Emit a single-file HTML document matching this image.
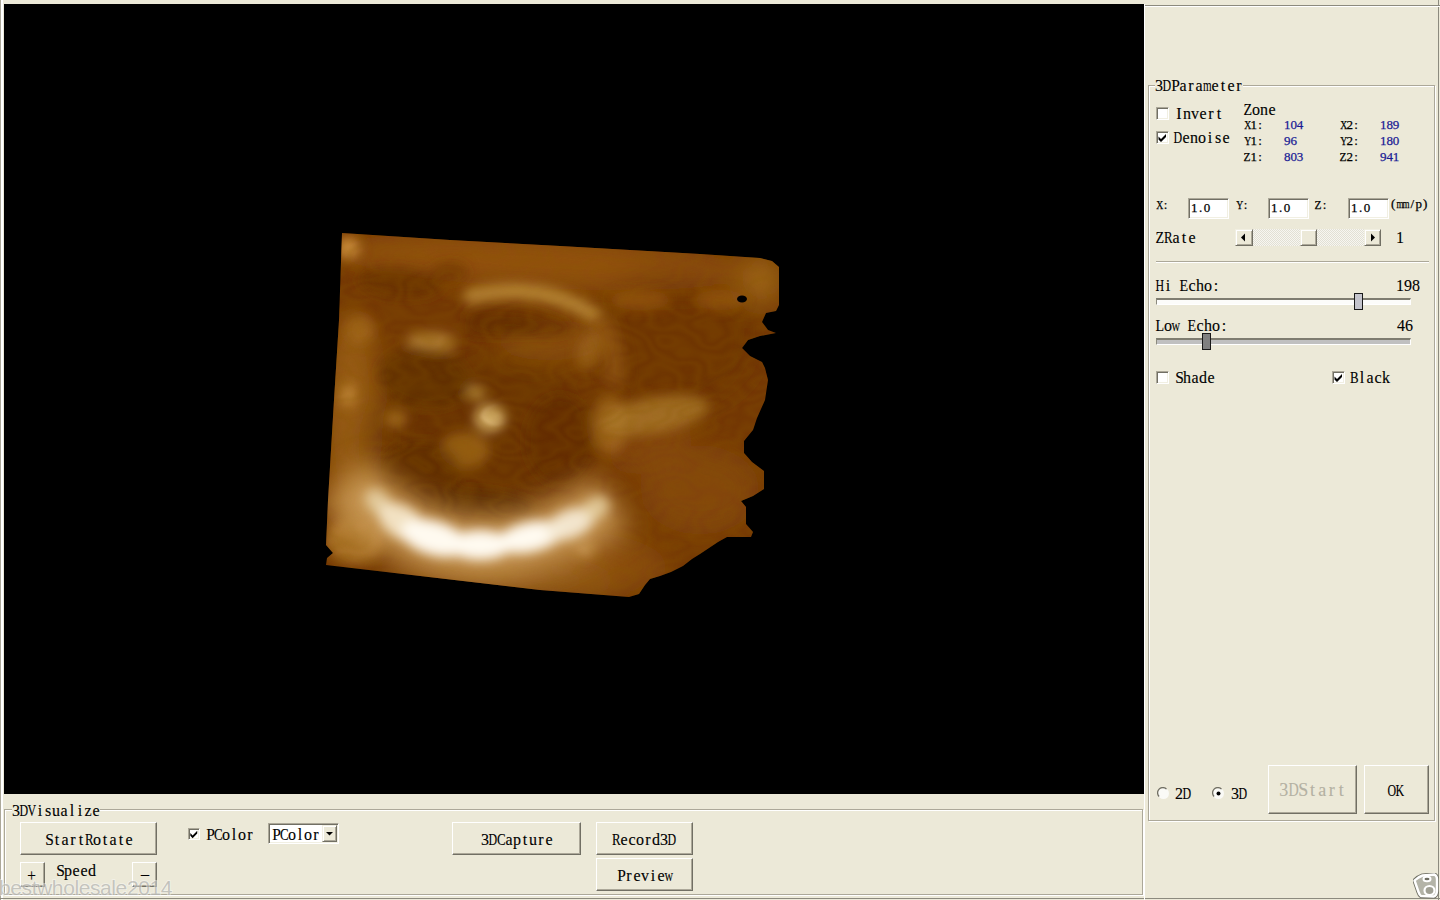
<!DOCTYPE html>
<html><head><meta charset="utf-8">
<style>
*{margin:0;padding:0;box-sizing:border-box}
html,body{width:1440px;height:900px;overflow:hidden;background:#ECE9D8}
body{position:relative;font-family:"Liberation Mono",monospace;color:#000}
.a{position:absolute}
.t{position:absolute;font-family:"Liberation Serif",serif;font-size:16px;line-height:16px;white-space:nowrap;-webkit-text-stroke:0.12px currentColor}
.s{position:absolute;font-family:"Liberation Serif",serif;font-size:13px;line-height:13px;white-space:nowrap;-webkit-text-stroke:0.25px currentColor}
i{display:inline-block;font-style:normal;text-align:center}
b{display:inline-block;font-weight:normal}
.lbl{display:inline-block}
.btn{position:absolute;background:#ECE9D8;border-top:1px solid #fff;border-left:1px solid #fff;border-right:1px solid #716F64;border-bottom:1px solid #716F64;box-shadow:inset -1px -1px 0 #ACA899}
.grp{position:absolute;border:1px solid #ACA899;box-shadow:1px 1px 0 #fff, inset 1px 1px 0 #fff}
.lbl{background:#ECE9D8}
.chk{position:absolute;width:13px;height:13px;background:#fff;border-top:1px solid #ACA899;border-left:1px solid #ACA899;border-right:1px solid #fff;border-bottom:1px solid #fff;box-shadow:inset 1px 1px 0 #716F64, inset -1px -1px 0 #F1EFE2}
.edit{position:absolute;background:#fff;border-top:1px solid #ACA899;border-left:1px solid #ACA899;border-right:1px solid #fff;border-bottom:1px solid #fff;box-shadow:inset 1px 1px 0 #716F64, inset -1px -1px 0 #F1EFE2}
.blue{color:#1a1a94}
</style></head><body>
<div class="a" style="left:0px;top:0px;width:1px;height:900px;background:#ACA899;"></div>
<div class="a" style="left:1px;top:0px;width:2px;height:900px;background:#fff;"></div>
<div class="a" style="left:1438px;top:0px;width:1px;height:900px;background:#8c8a7e;"></div>
<div class="a" style="left:0px;top:898px;width:1440px;height:1px;background:#8c8a7e;"></div>
<div class="a" style="left:1144px;top:5px;width:1295px;height:1px;background:#8c8a7e;"></div>
<div class="a" style="left:1144px;top:6px;width:1294px;height:1px;background:#fff;"></div>
<div class="a" style="left:1144px;top:4px;width:1px;height:900px;background:#fff;"></div>
<div class="a" style="left:4px;top:4px;width:1140px;height:790px;background:#000"></div>
<svg class="a" style="left:300px;top:220px" width="500" height="400" viewBox="300 220 500 400">
<defs><clipPath id="cp"><polygon points="342,233 450,240 560,246 700,254 760,258 772,261 779,267 779,290 779,305 776,311 766,313 762,322 768,330 776,333 760,336 748,340 742,348 750,356 762,362 765,368 768,380 765,400 757,418 753,430 744,441 744,453 752,462 764,471 764,489 753,496 741,501 746,507 746,524 753,532 751,537 727,537 718,542 709,548 700,554 692,559 683,566 671,572 660,576 650,579 645,585 639,594 629,597 540,590 326,565 327,558 333,553 326,545 328,500 334,400 339,320"/></clipPath>
<filter id="b12" filterUnits="userSpaceOnUse" x="250" y="170" width="600" height="500"><feGaussianBlur stdDeviation="12"/></filter>
<filter id="b8" filterUnits="userSpaceOnUse" x="250" y="170" width="600" height="500"><feGaussianBlur stdDeviation="8"/></filter>
<filter id="b6" filterUnits="userSpaceOnUse" x="250" y="170" width="600" height="500"><feGaussianBlur stdDeviation="6"/></filter>
<filter id="b4" filterUnits="userSpaceOnUse" x="250" y="170" width="600" height="500"><feGaussianBlur stdDeviation="4"/></filter>
<filter id="b14" filterUnits="userSpaceOnUse" x="250" y="170" width="600" height="500"><feGaussianBlur stdDeviation="14"/></filter>
<filter id="tex" filterUnits="userSpaceOnUse" x="300" y="220" width="500" height="400"><feTurbulence type="fractalNoise" baseFrequency="0.02 0.035" numOctaves="2" seed="7"/><feColorMatrix type="matrix" values="0 0 0 0 0.25  0 0 0 0 0.1  0 0 0 0 0  1 0 0 0 0"/><feComponentTransfer><feFuncA type="table" tableValues="0 0.6 0 0.6 0 0.6 0 0.6 0 0.6 0"/></feComponentTransfer><feGaussianBlur stdDeviation="1.3"/></filter>
</defs>
<g clip-path="url(#cp)">
<rect x="300" y="220" width="500" height="400" fill="#743804"/>
<g filter="url(#b14)">
<ellipse cx="540" cy="262" rx="210" ry="26" fill="#9a5810" opacity="0.8" transform="rotate(3 540 262)"/>
<ellipse cx="352" cy="420" rx="28" ry="110" fill="#a86c1e" opacity="0.7"/>
<ellipse cx="480" cy="440" rx="120" ry="88" fill="#62300a" opacity="0.55" transform="rotate(-5 480 440)"/>
<ellipse cx="670" cy="340" rx="90" ry="70" fill="#6a3004" opacity="0.5"/>
<ellipse cx="650" cy="440" rx="45" ry="30" fill="#8c4c0c" opacity="0.6" transform="rotate(-30 650 440)"/>
<ellipse cx="505" cy="575" rx="120" ry="18" fill="#a87028" opacity="0.7" transform="rotate(5 505 575)"/>
<ellipse cx="610" cy="560" rx="60" ry="25" fill="#9a5a14" opacity="0.6" transform="rotate(10 610 560)"/>
<ellipse cx="700" cy="490" rx="60" ry="45" fill="#8e4e0c" opacity="0.6"/>
<ellipse cx="762" cy="280" rx="20" ry="26" fill="#b07a20" opacity="0.75"/>
<ellipse cx="550" cy="340" rx="55" ry="20" fill="#a06418" opacity="0.55"/>
</g>
<g filter="url(#b6)">
<ellipse cx="348" cy="248" rx="12" ry="11" fill="#d09440" opacity="0.9"/>
<ellipse cx="400" cy="283" rx="42" ry="15" fill="#643004" opacity="0.7" transform="rotate(5 400 283)"/>
<ellipse cx="450" cy="272" rx="18" ry="10" fill="#6a3404" opacity="0.6"/>
<ellipse cx="360" cy="330" rx="14" ry="14" fill="#b07426" opacity="0.6"/>
<ellipse cx="430" cy="340" rx="25" ry="8" fill="#b88838" opacity="0.6" transform="rotate(-5 430 340)"/>
<ellipse cx="424" cy="378" rx="46" ry="30" fill="#5e2c04" opacity="0.7" transform="rotate(10 424 378)"/>
<ellipse cx="348" cy="395" rx="9" ry="12" fill="#c89040" opacity="0.7"/>
<ellipse cx="396" cy="419" rx="11" ry="8" fill="#b88030" opacity="0.7"/>
<ellipse cx="476" cy="393" rx="9" ry="7" fill="#c8a050" opacity="0.8"/>
<ellipse cx="490" cy="418" rx="15" ry="13" fill="#e4c27c" opacity="0.95"/>
<ellipse cx="465" cy="450" rx="25" ry="18" fill="#a87020" opacity="0.7"/>
<ellipse cx="420" cy="470" rx="40" ry="30" fill="#5e2c04" opacity="0.6"/>
<ellipse cx="560" cy="440" rx="35" ry="45" fill="#5e2c04" opacity="0.55"/>
<ellipse cx="475" cy="505" rx="65" ry="16" fill="#542602" opacity="0.7" transform="rotate(5 475 505)"/>
<ellipse cx="610" cy="425" rx="18" ry="30" fill="#b07828" opacity="0.6"/>
<ellipse cx="590" cy="350" rx="12" ry="20" fill="#b07828" opacity="0.5" transform="rotate(20 590 350)"/>
<ellipse cx="655" cy="415" rx="55" ry="18" fill="#b08030" opacity="0.7" transform="rotate(-10 655 415)"/>
<ellipse cx="585" cy="548" rx="9" ry="8" fill="#d0a060" opacity="0.8"/>
<ellipse cx="640" cy="300" rx="30" ry="10" fill="#a8661c" opacity="0.5"/>
<ellipse cx="720" cy="300" rx="25" ry="10" fill="#a8661c" opacity="0.5"/>
<ellipse cx="500" cy="328" rx="40" ry="9" fill="#5e2c04" opacity="0.5" transform="rotate(-3 500 328)"/>
<ellipse cx="355" cy="540" rx="30" ry="24" fill="#b88030" opacity="0.8"/>
<ellipse cx="432" cy="342" rx="25" ry="8" fill="#b88838" opacity="0.7" transform="rotate(10 432 342)"/>
<ellipse cx="518" cy="322" rx="55" ry="13" fill="#5e2c04" opacity="0.55" transform="rotate(8 518 322)"/>
</g>
<rect x="300" y="220" width="500" height="400" filter="url(#tex)" opacity="0.4"/>
<path d="M465 298 Q540 278 598 318" stroke="#c39440" stroke-width="15" fill="none" opacity="0.8" filter="url(#b6)"/><path d="M598 318 Q618 345 614 385" stroke="#a86c24" stroke-width="14" fill="none" opacity="0.6" filter="url(#b8)"/>
<path d="M345 482 Q465 600 612 502" stroke="#cc9c58" stroke-width="62" fill="none" opacity="0.9" filter="url(#b14)"/>
<g filter="url(#b6)">
<ellipse cx="378" cy="502" rx="15" ry="11" fill="#e8d4a8" opacity="0.85" transform="rotate(45 378 502)"/>
<ellipse cx="402" cy="522" rx="26" ry="16" fill="#f4e6c8" opacity="0.95" transform="rotate(32 402 522)"/>
<ellipse cx="434" cy="538" rx="34" ry="17" fill="#fffaf0" opacity="1" transform="rotate(16 434 538)"/>
<ellipse cx="480" cy="545" rx="32" ry="15" fill="#fffaf0" opacity="1" transform="rotate(0 480 545)"/>
<ellipse cx="530" cy="537" rx="34" ry="15" fill="#fffaf0" opacity="1" transform="rotate(-12 530 537)"/>
<ellipse cx="570" cy="524" rx="26" ry="14" fill="#f6ead4" opacity="0.95" transform="rotate(-22 570 524)"/>
<ellipse cx="596" cy="508" rx="14" ry="11" fill="#e8d4a8" opacity="0.8" transform="rotate(-35 596 508)"/>
</g>
<ellipse cx="742" cy="299" rx="5" ry="3.5" fill="#000"/>
</g></svg>
<div class="grp" style="left:1148px;top:85px;width:287px;height:736px"></div>
<div class="t" style="left:1155px;top:78px;"><span class="lbl"><i style="width:8px">3</i><i style="width:8px"><b style="margin:0 -1.78px;transform:scaleX(0.744)">D</b></i><i style="width:8px"><b style="margin:0 -0.45px;transform:scaleX(0.966)">P</b></i><i style="width:8px">a</i><i style="width:8px">r</i><i style="width:8px">a</i><i style="width:8px"><b style="margin:0 -2.23px;transform:scaleX(0.691)">m</b></i><i style="width:8px">e</i><i style="width:8px">t</i><i style="width:8px">e</i><i style="width:8px">r</i></span></div>
<div class="chk" style="left:1156px;top:107px;width:13px;height:13px"></div>
<div class="t" style="left:1175px;top:106px;"><i style="width:8px">I</i><i style="width:8px">n</i><i style="width:8px">v</i><i style="width:8px">e</i><i style="width:8px">r</i><i style="width:8px">t</i></div>
<div class="chk" style="left:1156px;top:131px;width:13px;height:13px"></div>
<svg class="a" style="left:1156px;top:131px" width="13" height="13" viewBox="0 0 13 13"><path d="M2.5 5.5 L5 8 L10 3 L10 6 L5 11 L2.5 8.5 Z" fill="#000"/></svg>
<div class="t" style="left:1174px;top:130px;"><i style="width:8px"><b style="margin:0 -1.78px;transform:scaleX(0.744)">D</b></i><i style="width:8px">e</i><i style="width:8px">n</i><i style="width:8px">o</i><i style="width:8px">i</i><i style="width:8px">s</i><i style="width:8px">e</i></div>
<div class="t" style="left:1244px;top:102px;"><i style="width:8px"><b style="margin:0 -0.89px;transform:scaleX(0.879)">Z</b></i><i style="width:8px">o</i><i style="width:8px">n</i><i style="width:8px">e</i></div>
<div class="s" style="left:1244px;top:118px;"><i style="width:6.4px"><b style="margin:0 -1.50px;transform:scaleX(0.745)">X</b></i><i style="width:6.4px">1</i><i style="width:6.4px">:</i></div>
<div class="s blue" style="left:1284px;top:118px;"><i style="width:6.4px">1</i><i style="width:6.4px">0</i><i style="width:6.4px">4</i></div>
<div class="s" style="left:1340px;top:118px;"><i style="width:6.4px"><b style="margin:0 -1.50px;transform:scaleX(0.745)">X</b></i><i style="width:6.4px">2</i><i style="width:6.4px">:</i></div>
<div class="s blue" style="left:1380px;top:118px;"><i style="width:6.4px">1</i><i style="width:6.4px">8</i><i style="width:6.4px">9</i></div>
<div class="s" style="left:1244px;top:134px;"><i style="width:6.4px"><b style="margin:0 -1.50px;transform:scaleX(0.745)">Y</b></i><i style="width:6.4px">1</i><i style="width:6.4px">:</i></div>
<div class="s blue" style="left:1284px;top:134px;"><i style="width:6.4px">9</i><i style="width:6.4px">6</i></div>
<div class="s" style="left:1340px;top:134px;"><i style="width:6.4px"><b style="margin:0 -1.50px;transform:scaleX(0.745)">Y</b></i><i style="width:6.4px">2</i><i style="width:6.4px">:</i></div>
<div class="s blue" style="left:1380px;top:134px;"><i style="width:6.4px">1</i><i style="width:6.4px">8</i><i style="width:6.4px">0</i></div>
<div class="s" style="left:1244px;top:150px;"><i style="width:6.4px"><b style="margin:0 -0.77px;transform:scaleX(0.882)">Z</b></i><i style="width:6.4px">1</i><i style="width:6.4px">:</i></div>
<div class="s blue" style="left:1284px;top:150px;"><i style="width:6.4px">8</i><i style="width:6.4px">0</i><i style="width:6.4px">3</i></div>
<div class="s" style="left:1340px;top:150px;"><i style="width:6.4px"><b style="margin:0 -0.77px;transform:scaleX(0.882)">Z</b></i><i style="width:6.4px">2</i><i style="width:6.4px">:</i></div>
<div class="s blue" style="left:1380px;top:150px;"><i style="width:6.4px">9</i><i style="width:6.4px">4</i><i style="width:6.4px">1</i></div>
<div class="s" style="left:1156px;top:198px;"><i style="width:6.4px"><b style="margin:0 -1.50px;transform:scaleX(0.745)">X</b></i><i style="width:6.4px">:</i></div>
<div class="edit" style="left:1188px;top:198px;width:41px;height:21px"></div>
<div class="s" style="left:1191px;top:201px;"><i style="width:6.4px">1</i><i style="width:6.4px">.</i><i style="width:6.4px">0</i></div>
<div class="s" style="left:1236px;top:198px;"><i style="width:6.4px"><b style="margin:0 -1.50px;transform:scaleX(0.745)">Y</b></i><i style="width:6.4px">:</i></div>
<div class="edit" style="left:1268px;top:198px;width:41px;height:21px"></div>
<div class="s" style="left:1271px;top:201px;"><i style="width:6.4px">1</i><i style="width:6.4px">.</i><i style="width:6.4px">0</i></div>
<div class="s" style="left:1315px;top:198px;"><i style="width:6.4px"><b style="margin:0 -0.77px;transform:scaleX(0.882)">Z</b></i><i style="width:6.4px">:</i></div>
<div class="edit" style="left:1348px;top:198px;width:41px;height:21px"></div>
<div class="s" style="left:1351px;top:201px;"><i style="width:6.4px">1</i><i style="width:6.4px">.</i><i style="width:6.4px">0</i></div>
<div class="s" style="left:1390px;top:197px;"><i style="width:6.4px">(</i><i style="width:6.4px"><b style="margin:0 -1.85px;transform:scaleX(0.692)">m</b></i><i style="width:6.4px"><b style="margin:0 -1.85px;transform:scaleX(0.692)">m</b></i><i style="width:6.4px">/</i><i style="width:6.4px">p</i><i style="width:6.4px">)</i></div>
<div class="t" style="left:1156px;top:230px;"><i style="width:8px"><b style="margin:0 -0.89px;transform:scaleX(0.879)">Z</b></i><i style="width:8px"><b style="margin:0 -1.34px;transform:scaleX(0.806)">R</b></i><i style="width:8px">a</i><i style="width:8px">t</i><i style="width:8px">e</i></div>
<div class="t" style="left:1396px;top:230px;"><i style="width:8px">1</i></div>
<div class="a" style="left:1156px;top:261px;width:273px;height:1px;background:#ACA899;"></div>
<div class="a" style="left:1156px;top:262px;width:273px;height:1px;background:#fff;"></div>
<div class="t" style="left:1156px;top:278px;"><i style="width:8px"><b style="margin:0 -1.78px;transform:scaleX(0.744)">H</b></i><i style="width:8px">i</i><i style="width:8px"></i><i style="width:8px"><b style="margin:0 -0.89px;transform:scaleX(0.879)">E</b></i><i style="width:8px">c</i><i style="width:8px">h</i><i style="width:8px">o</i><i style="width:8px">:</i></div>
<div class="t" style="left:1396px;top:278px;"><i style="width:8px">1</i><i style="width:8px">9</i><i style="width:8px">8</i></div>
<div class="t" style="left:1156px;top:318px;"><i style="width:8px"><b style="margin:0 -0.89px;transform:scaleX(0.879)">L</b></i><i style="width:8px">o</i><i style="width:8px"><b style="margin:0 -1.78px;transform:scaleX(0.744)">w</b></i><i style="width:8px"></i><i style="width:8px"><b style="margin:0 -0.89px;transform:scaleX(0.879)">E</b></i><i style="width:8px">c</i><i style="width:8px">h</i><i style="width:8px">o</i><i style="width:8px">:</i></div>
<div class="t" style="left:1397px;top:318px;"><i style="width:8px">4</i><i style="width:8px">6</i></div>
<div class="chk" style="left:1156px;top:371px;width:13px;height:13px"></div>
<div class="t" style="left:1175px;top:370px;"><i style="width:8px"><b style="margin:0 -0.45px;transform:scaleX(0.966)">S</b></i><i style="width:8px">h</i><i style="width:8px">a</i><i style="width:8px">d</i><i style="width:8px">e</i></div>
<div class="chk" style="left:1332px;top:371px;width:13px;height:13px"></div>
<svg class="a" style="left:1332px;top:371px" width="13" height="13" viewBox="0 0 13 13"><path d="M2.5 5.5 L5 8 L10 3 L10 6 L5 11 L2.5 8.5 Z" fill="#000"/></svg>
<div class="t" style="left:1350px;top:370px;"><i style="width:8px"><b style="margin:0 -1.34px;transform:scaleX(0.806)">B</b></i><i style="width:8px">l</i><i style="width:8px">a</i><i style="width:8px">c</i><i style="width:8px">k</i></div>
<div class="t" style="left:1175px;top:786px;"><i style="width:8px">2</i><i style="width:8px"><b style="margin:0 -1.78px;transform:scaleX(0.744)">D</b></i></div>
<div class="t" style="left:1231px;top:786px;"><i style="width:8px">3</i><i style="width:8px"><b style="margin:0 -1.78px;transform:scaleX(0.744)">D</b></i></div>
<div class="btn" style="left:1268px;top:765px;width:89px;height:49px"></div>
<div class="t" style="left:1279px;top:781px;color:#B4B1A3;font-size:18px;line-height:18px;"><i style="width:9.6px">3</i><i style="width:9.6px"><b style="margin:0 -1.70px;transform:scaleX(0.785)">D</b></i><i style="width:9.6px">S</i><i style="width:9.6px">t</i><i style="width:9.6px">a</i><i style="width:9.6px">r</i><i style="width:9.6px">t</i></div>
<div class="btn" style="left:1364px;top:765px;width:65px;height:49px"></div>
<div class="t" style="left:1388px;top:783px;"><i style="width:8px"><b style="margin:0 -1.78px;transform:scaleX(0.744)">O</b></i><i style="width:8px"><b style="margin:0 -1.78px;transform:scaleX(0.744)">K</b></i></div>
<div class="grp" style="left:4px;top:809px;width:1139px;height:86px"></div>
<div class="t" style="left:12px;top:803px;"><span class="lbl"><i style="width:8px">3</i><i style="width:8px"><b style="margin:0 -1.78px;transform:scaleX(0.744)">D</b></i><i style="width:8px"><b style="margin:0 -1.78px;transform:scaleX(0.744)">V</b></i><i style="width:8px">i</i><i style="width:8px">s</i><i style="width:8px">u</i><i style="width:8px">a</i><i style="width:8px">l</i><i style="width:8px">i</i><i style="width:8px">z</i><i style="width:8px">e</i></span></div>
<div class="btn" style="left:20px;top:822px;width:137px;height:33px"></div>
<div class="t" style="left:45px;top:832px;"><i style="width:8px"><b style="margin:0 -0.45px;transform:scaleX(0.966)">S</b></i><i style="width:8px">t</i><i style="width:8px">a</i><i style="width:8px">r</i><i style="width:8px">t</i><i style="width:8px"><b style="margin:0 -1.34px;transform:scaleX(0.806)">R</b></i><i style="width:8px">o</i><i style="width:8px">t</i><i style="width:8px">a</i><i style="width:8px">t</i><i style="width:8px">e</i></div>
<div class="btn" style="left:20px;top:862px;width:25px;height:25px"></div>
<div class="t" style="left:28px;top:868px;"><i style="width:8px"><b style="margin:0 -0.52px;transform:scaleX(0.952)">+</b></i></div>
<div class="t" style="left:56px;top:863px;"><i style="width:8px"><b style="margin:0 -0.45px;transform:scaleX(0.966)">S</b></i><i style="width:8px">p</i><i style="width:8px">e</i><i style="width:8px">e</i><i style="width:8px">d</i></div>
<div class="btn" style="left:132px;top:862px;width:25px;height:25px"></div>
<div class="t" style="left:141px;top:866px;"><i style="width:8px">–</i></div>
<div class="chk" style="left:188px;top:828px;width:12px;height:12px"></div>
<svg class="a" style="left:188px;top:828px" width="12" height="12" viewBox="0 0 13 13"><path d="M2.5 5.5 L5 8 L10 3 L10 6 L5 11 L2.5 8.5 Z" fill="#000"/></svg>
<div class="t" style="left:206px;top:827px;"><i style="width:8px"><b style="margin:0 -0.45px;transform:scaleX(0.966)">P</b></i><i style="width:8px"><b style="margin:0 -1.34px;transform:scaleX(0.806)">C</b></i><i style="width:8px">o</i><i style="width:8px">l</i><i style="width:8px">o</i><i style="width:8px">r</i></div>
<div class="edit" style="left:268px;top:823px;width:71px;height:21px"></div>
<div class="t" style="left:272px;top:827px;"><i style="width:8px"><b style="margin:0 -0.45px;transform:scaleX(0.966)">P</b></i><i style="width:8px"><b style="margin:0 -1.34px;transform:scaleX(0.806)">C</b></i><i style="width:8px">o</i><i style="width:8px">l</i><i style="width:8px">o</i><i style="width:8px">r</i></div>
<div class="btn" style="left:452px;top:822px;width:129px;height:33px"></div>
<div class="t" style="left:481px;top:832px;"><i style="width:8px">3</i><i style="width:8px"><b style="margin:0 -1.78px;transform:scaleX(0.744)">D</b></i><i style="width:8px"><b style="margin:0 -1.34px;transform:scaleX(0.806)">C</b></i><i style="width:8px">a</i><i style="width:8px">p</i><i style="width:8px">t</i><i style="width:8px">u</i><i style="width:8px">r</i><i style="width:8px">e</i></div>
<div class="btn" style="left:596px;top:822px;width:97px;height:33px"></div>
<div class="t" style="left:612px;top:832px;"><i style="width:8px"><b style="margin:0 -1.34px;transform:scaleX(0.806)">R</b></i><i style="width:8px">e</i><i style="width:8px">c</i><i style="width:8px">o</i><i style="width:8px">r</i><i style="width:8px">d</i><i style="width:8px">3</i><i style="width:8px"><b style="margin:0 -1.78px;transform:scaleX(0.744)">D</b></i></div>
<div class="btn" style="left:596px;top:858px;width:97px;height:33px"></div>
<div class="t" style="left:617px;top:868px;"><i style="width:8px"><b style="margin:0 -0.45px;transform:scaleX(0.966)">P</b></i><i style="width:8px">r</i><i style="width:8px">e</i><i style="width:8px">v</i><i style="width:8px">i</i><i style="width:8px">e</i><i style="width:8px"><b style="margin:0 -1.78px;transform:scaleX(0.744)">w</b></i></div>
<div class="a" style="left:1236px;top:229px;width:145px;height:17px;background:repeating-conic-gradient(#e2e0d4 0 25%,#f7f6f1 0 50%) 0 0/2px 2px"></div>
<div class="a" style="left:1235px;top:229px;width:18px;height:17px;background:#ECE9D8;border-top:1px solid #F1EFE2;border-left:1px solid #F1EFE2;border-right:1px solid #716F64;border-bottom:1px solid #716F64;box-shadow:inset 1px 1px 0 #fff, inset -1px -1px 0 #ACA899"></div>
<svg class="a" style="left:1235px;top:229px" width="18" height="17"><path d="M6 8.5 L10 4.5 L10 12.5 Z" fill="#000"/></svg>
<div class="a" style="left:1300px;top:229px;width:17px;height:17px;background:#ECE9D8;border-top:1px solid #F1EFE2;border-left:1px solid #F1EFE2;border-right:1px solid #716F64;border-bottom:1px solid #716F64;box-shadow:inset 1px 1px 0 #fff, inset -1px -1px 0 #ACA899"></div>
<div class="a" style="left:1364px;top:229px;width:17px;height:17px;background:#ECE9D8;border-top:1px solid #F1EFE2;border-left:1px solid #F1EFE2;border-right:1px solid #716F64;border-bottom:1px solid #716F64;box-shadow:inset 1px 1px 0 #fff, inset -1px -1px 0 #ACA899"></div>
<svg class="a" style="left:1364px;top:229px" width="17" height="17"><path d="M11 8.5 L7 4.5 L7 12.5 Z" fill="#000"/></svg>
<div class="a" style="left:1156px;top:298px;width:255px;height:7px;background:#fcfcfa;border-top:2px solid #7e7c70;border-left:1px solid #8c8a7e;border-bottom:1px solid #fff;border-right:1px solid #fff"></div>
<div class="a" style="left:1354px;top:293px;width:9px;height:17px;background:#c4c4cc;border:1px solid #181818"></div>
<div class="a" style="left:1156px;top:338px;width:255px;height:7px;background:#c0c0c0;border-top:2px solid #7e7c70;border-left:1px solid #8c8a7e;border-bottom:1px solid #fff;border-right:1px solid #fff"></div>
<div class="a" style="left:1202px;top:333px;width:9px;height:17px;background:#808080;border:1px solid #181818"></div>
<svg class="a" style="left:1157px;top:787px" width="13" height="13" viewBox="0 0 13 13"><circle cx="6.5" cy="6.5" r="5.5" fill="#fafaf6"/><path d="M2.1 9.5 A5.2 5.2 0 0 1 9.5 2.1" stroke="#716F64" stroke-width="1.3" fill="none"/></svg>
<svg class="a" style="left:1212px;top:787px" width="13" height="13" viewBox="0 0 13 13"><circle cx="6.5" cy="6.5" r="5.5" fill="#fafaf6"/><path d="M2.1 9.5 A5.2 5.2 0 0 1 9.5 2.1" stroke="#716F64" stroke-width="1.3" fill="none"/><circle cx="6.5" cy="6.5" r="2" fill="#000"/></svg>
<div class="a" style="left:322px;top:825px;width:15px;height:17px;background:#ECE9D8;border-top:1px solid #F1EFE2;border-left:1px solid #F1EFE2;border-right:1px solid #716F64;border-bottom:1px solid #716F64;box-shadow:inset 1px 1px 0 #fff, inset -1px -1px 0 #ACA899"></div>
<svg class="a" style="left:322px;top:825px" width="15" height="17"><path d="M4 7 L11 7 L7.5 10.5 Z" fill="#000"/></svg>
<div class="a" style="left:-1px;top:876px;font-family:'Liberation Sans',sans-serif;font-size:21px;letter-spacing:-0.4px;line-height:24px;color:rgba(150,150,145,0.5);-webkit-text-stroke:1.6px rgba(250,250,250,0.55);paint-order:stroke fill;white-space:pre">bestwholesale2014</div>
<svg class="a" style="left:1413px;top:873px" width="26" height="26" viewBox="0 0 26 26"><path d="M1.5 7.5 Q5 4 9.5 2.5 L21.5 1.5 Q24 3 24 6 L24 18 Q23.5 22.5 21 23.5 L8 23 Q6.5 22 5.5 19 Z" fill="#a8a89c" stroke="#6e6e62" stroke-width="4.2" stroke-linejoin="round"/><path d="M1.5 7.5 Q5 4 9.5 2.5 L21.5 1.5 Q24 3 24 6 L24 18 Q23.5 22.5 21 23.5 L8 23 Q6.5 22 5.5 19 Z" fill="#b4b4a8" stroke="#fff" stroke-width="2.4" stroke-linejoin="round"/><ellipse cx="16.5" cy="17.5" rx="5" ry="4.5" fill="#a0a094" stroke="#fff" stroke-width="2.2"/><ellipse cx="14" cy="6" rx="3.5" ry="2.2" fill="#6e6e62" stroke="#fff" stroke-width="2"/></svg>
</body></html>
